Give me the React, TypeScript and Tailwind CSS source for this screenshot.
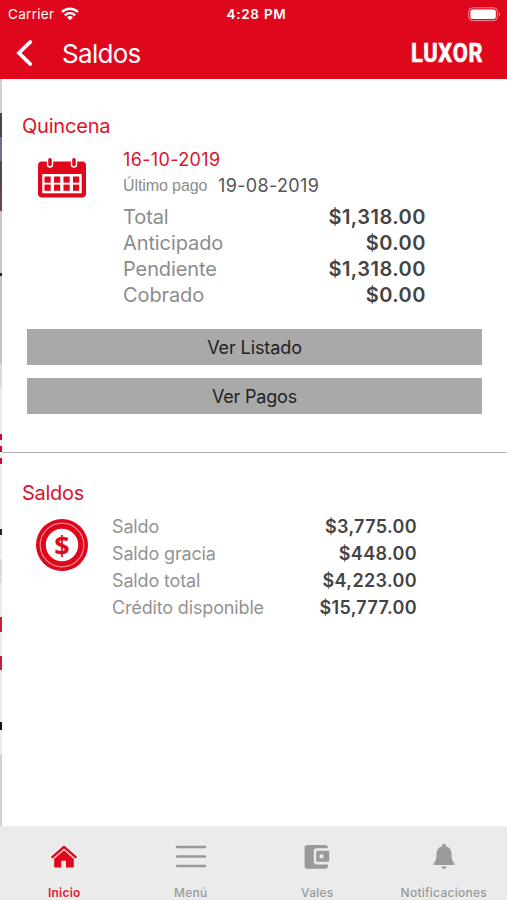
interface Row {
  label: string;
  value: string;
}

const quincena: Row[] = [
  { label: 'Total', value: '$1,318.00' },
  { label: 'Anticipado', value: '$0.00' },
  { label: 'Pendiente', value: '$1,318.00' },
  { label: 'Cobrado', value: '$0.00' },
];

const saldos: Row[] = [
  { label: 'Saldo', value: '$3,775.00' },
  { label: 'Saldo gracia', value: '$448.00' },
  { label: 'Saldo total', value: '$4,223.00' },
  { label: 'Crédito disponible', value: '$15,777.00' },
];

// Sliver of the previous screen behind this one, from top to bottom
const edge = [
  { h: 34, color: '#cfcfcf' },
  { h: 24, color: '#48464c' },
  { h: 24, color: '#6c6c96' },
  { h: 24, color: '#4b4855' },
  { h: 26, color: '#6b4450' },
  { h: 62, color: '#c6c6c6' },
  { h: 3, color: '#222222' },
  { h: 88, color: '#c2c2c2' },
  { h: 24, color: '#dcdcdc' },
  { h: 46, color: '#ececec' },
  { h: 6, color: '#c8102e' },
  { h: 6, color: '#ececec' },
  { h: 6, color: '#c8102e' },
  { h: 6, color: '#ececec' },
  { h: 6, color: '#c8102e' },
  { h: 65, color: '#e9e9e9' },
  { h: 6, color: '#222222' },
  { h: 24, color: '#ececec' },
  { h: 24, color: '#dcdcdc' },
  { h: 34, color: '#ececec' },
  { h: 15, color: '#c8203a' },
  { h: 24, color: '#ececec' },
  { h: 14, color: '#c8203a' },
  { h: 52, color: '#ececec' },
  { h: 8, color: '#111111' },
  { h: 24, color: '#ececec' },
  { h: 72, color: '#d4d0d0' },
];

function StatusBar() {
  return (
    <div className="grid h-[28px] grid-cols-3 items-center text-white">
      <div className="flex items-center gap-[7px] pl-[8px] text-[13.5px] tracking-[0.3px]">
        <span>Carrier</span>
        <svg width="18" height="14" viewBox="0 0 18 14" fill="none" stroke="white" strokeWidth="2.4">
          <path d="M1 5a11.4 11.4 0 0 1 16 0" />
          <path d="M3.8 8.3a7.4 7.4 0 0 1 10.4 0" />
          <path d="M6 10.2a4.2 4.2 0 0 1 6 0L9 13.2z" fill="white" stroke="none" />
        </svg>
      </div>
      <div className="pl-[6px] text-center text-[13.5px] font-semibold tracking-[0.75px]">4:28 PM</div>
      <div className="flex justify-end pr-[6px]">
        <svg width="33" height="15" viewBox="0 0 33 15">
          <rect x="0.8" y="0.8" width="28.6" height="12.8" rx="3.6" fill="none" stroke="#f4909a" />
          <rect x="2.4" y="2.4" width="25.4" height="9.6" rx="2" fill="white" />
          <path d="M30.9 5.2v4c1.6-.6 1.6-3.4 0-4z" fill="#f4909a" />
        </svg>
      </div>
    </div>
  );
}

function CalendarIcon() {
  return (
    <svg width="48" height="40" viewBox="0 0 48 40">
      <rect x="0" y="3.5" width="48" height="36" rx="4" fill="#df071c" />
      <rect x="4.3" y="16" width="39.4" height="19.3" fill="white" />
      {[12, 36].map((x) => (
        <g key={x} strokeLinecap="round">
          <path d={`M${x} 2.4v4.2`} stroke="white" strokeWidth="6.4" />
          <path d={`M${x} 1.8v4.6`} stroke="#df071c" strokeWidth="3.6" />
        </g>
      ))}
      {[6.5, 16, 25.5, 35].map((x) =>
        [18.5, 26.6].map((y) => (
          <rect key={`${x}-${y}`} x={x} y={y} width="6.2" height="6.2" fill="#df071c" />
        ))
      )}
    </svg>
  );
}

function CoinIcon() {
  return (
    <svg width="52" height="52" viewBox="0 0 52 52">
      <circle cx="26" cy="26" r="26" fill="#df071c" />
      <circle cx="26" cy="26" r="21.8" fill="none" stroke="#f58b95" strokeWidth="1.2" />
      <circle cx="26" cy="26" r="16.2" fill="white" />
      <text x="26" y="35.6" textAnchor="middle" fontSize="27" fontWeight="700" fill="#df071c" fontFamily="Open Sans, sans-serif">
        $
      </text>
    </svg>
  );
}

function HomeIcon() {
  return (
    <svg width="28" height="26" viewBox="0 0 28 26" fill="#df071c">
      <path d="M14 5.8 4.2 14.6v8c0 .6.4 1 1 1h6v-6.8h4.8v6.8h6.8c.6 0 1-.4 1-1v-8z" />
      <path d="M2.4 13.2 14 2.9l11.6 10.3" fill="none" stroke="#df071c" strokeWidth="2.4" strokeLinecap="round" strokeLinejoin="round" />
      <path d="M4.2 14.8 14 6l9.8 8.8" fill="none" stroke="#f0b0b6" strokeWidth="0.9" />
    </svg>
  );
}

function MenuIcon() {
  return (
    <svg width="32" height="26" viewBox="0 0 32 26" stroke="#9a9a9a" strokeWidth="2.5" strokeLinecap="round">
      <path d="M2 3h28M2 12.4h28M2 22.1h28" />
    </svg>
  );
}

function WalletIcon() {
  return (
    <svg width="26" height="26" viewBox="0 0 26 26" fill="#9a9a9a">
      <path d="M2.8.9h18.6c1.4 0 2.5 1 2.5 2.3v1H13c-2 0-3.2 1.2-3.2 3.2v10c0 2 1.2 3.2 3.2 3.2h10.9v1.6c0 1.4-1.1 2.5-2.5 2.5H2.8A2.2 2.2 0 0 1 .6 22.5V3.1C.6 1.9 1.6.9 2.8.9z" />
      <path fillRule="evenodd" d="M13.6 6.8h11.6v11H13.6c-.8 0-1.4-.6-1.4-1.4V8.2c0-.8.6-1.4 1.4-1.4zM15.6 10.4v3.8h3.8v-3.8z" />
    </svg>
  );
}

function BellIcon() {
  return (
    <svg width="22" height="28" viewBox="0 0 22 28" fill="#9a9a9a">
      <path d="M11 .8c-1.2 0-1.9.8-1.9 1.9v.6C5.6 4.2 3.5 7 3.5 10.8c0 5.3-.8 7.7-2.8 9.3v1.8h20.6v-1.8c-2-1.6-2.8-4-2.8-9.3 0-3.8-2.1-6.6-5.6-7.5v-.6c0-1.1-.7-1.9-1.9-1.9z" />
      <path d="M8.4 23.6h5.2c-.3 1.5-1.2 2.4-2.6 2.4s-2.3-.9-2.6-2.4z" />
    </svg>
  );
}

const tabs = [
  { label: 'Inicio', icon: <HomeIcon />, active: true },
  { label: 'Menú', icon: <MenuIcon />, active: false },
  { label: 'Vales', icon: <WalletIcon />, active: false },
  { label: 'Notificaciones', icon: <BellIcon />, active: false },
];

export default function App() {
  return (
    <div className="flex h-[900px] w-[507px] flex-col overflow-hidden bg-white font-['Inter','Liberation_Sans',sans-serif]">
      <header className="h-[79px] shrink-0 bg-[#df071c]">
        <StatusBar />
        <div className="flex h-[50px] items-center pl-[16px] pr-[25px] text-white">
          <svg width="17" height="26" viewBox="0 0 17 26" fill="none" stroke="white" strokeWidth="3.8">
            <path d="M14.2 2 3 13l11.2 11" strokeLinecap="round" />
          </svg>
          <h1 className="ml-[29px] text-[26px] tracking-[-0.7px]">Saldos</h1>
          <span className="ml-auto w-[71px] origin-left scale-x-[0.84] font-['Roboto',sans-serif] text-[26px] font-bold leading-none [-webkit-text-stroke:0.7px_white] tracking-[0.9px]">
            LUXOR
          </span>
        </div>
      </header>

      <main className="flex min-h-0 grow">
        <div className="flex w-[2px] shrink-0 flex-col">
          {edge.map((s, i) => (
            <div key={i} className="w-[2px] shrink-0" style={{ height: s.h, backgroundColor: s.color }} />
          ))}
        </div>

        <div className="grow">
          <section className="h-[374px] border-b-[1.5px] border-[#b0b0b0] pt-[34px]">
            <h2 className="pl-[20px] text-[20px] leading-[26px] tracking-[-0.2px] text-[#d9142b]">Quincena</h2>
            <div className="flex pl-[36px]">
              <div className="w-[85px] pt-[19px]">
                <CalendarIcon />
              </div>
              <div className="w-[303px] pt-[8px]">
                <p className="text-[18px] leading-[26px] tracking-[0.35px] text-[#d9142b]">16-10-2019</p>
                <p className="flex items-center leading-[26px]">
                  <span className="w-[95px] font-['Liberation_Sans',sans-serif] text-[16px] tracking-[-0.1px] text-[#8c8c8c]">Último pago</span>
                  <span className="text-[18px] tracking-[0.35px] text-[#555555]">19-08-2019</span>
                </p>
                <dl className="mt-[5px]">
                  {quincena.map((r) => (
                    <div key={r.label} className="flex h-[26px] items-center justify-between text-[20px]">
                      <dt className="tracking-[-0.1px] text-[#8c8c8c]">{r.label}</dt>
                      <dd className="font-semibold tracking-[0.5px] text-[#444444]">{r.value}</dd>
                    </div>
                  ))}
                </dl>
              </div>
            </div>
            <div className="mt-[21px] flex flex-col gap-[13px] pl-[25px] pr-[25px]">
              <button className="h-[36px] bg-[#a9a9a9] text-[18px] tracking-[-0.1px] text-[#222222]">Ver Listado</button>
              <button className="h-[36px] bg-[#a9a9a9] text-[18px] tracking-[-0.2px] text-[#222222]">Ver Pagos</button>
            </div>
          </section>

          <section className="pt-[27px]">
            <h2 className="pl-[20px] text-[20px] leading-[26px] tracking-[-0.3px] text-[#d9142b]">Saldos</h2>
            <div className="flex pl-[34px]">
              <div className="w-[76px] pt-[13px]">
                <CoinIcon />
              </div>
              <dl className="w-[305px] pt-[7px]">
                {saldos.map((r) => (
                  <div key={r.label} className="flex h-[27px] items-center justify-between text-[18px]">
                    <dt className="tracking-[-0.15px] text-[#939393]">{r.label}</dt>
                    <dd className="font-semibold tracking-[0.35px] text-[#444444]">{r.value}</dd>
                  </div>
                ))}
              </dl>
            </div>
          </section>
        </div>
      </main>

      <nav className="grid h-[74px] shrink-0 grid-cols-4 bg-[#ebebeb] pl-[1px] pt-[16px]">
        {tabs.map((t) => (
          <a key={t.label} className="flex flex-col items-center">
            <div className="flex h-[30px] items-center">{t.icon}</div>
            <span
              className={`mt-[11px] whitespace-nowrap text-[12px] leading-[19px] tracking-[0.25px] ${
                t.active ? 'font-semibold text-[#df2137]' : 'font-medium text-[#9a9a9a]'
              }`}
            >
              {t.label}
            </span>
          </a>
        ))}
      </nav>
    </div>
  );
}
